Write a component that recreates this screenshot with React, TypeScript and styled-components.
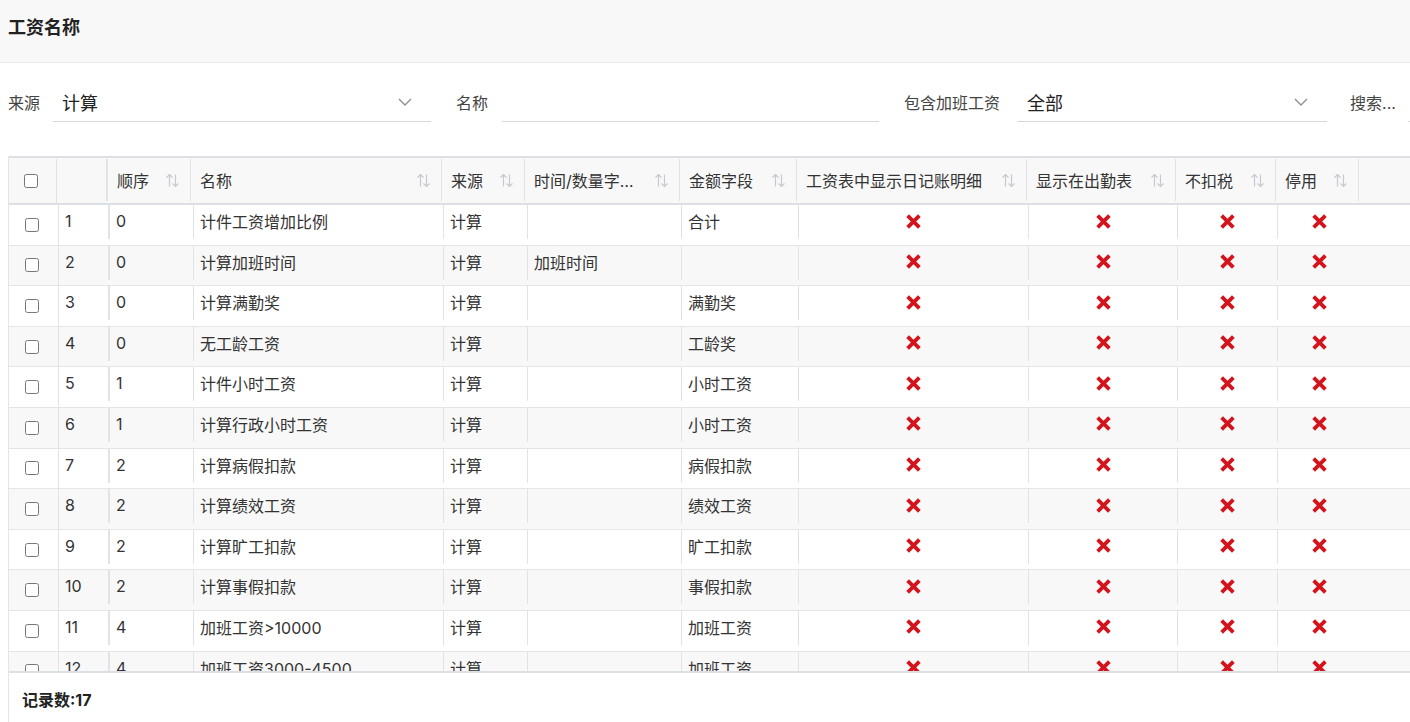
import React from "react";
import styled, { createGlobalStyle } from "styled-components";

const GlobalStyle = createGlobalStyle`
  html, body {
    margin: 0;
    padding: 0;
    background: #fff;
  }
  body {
    font-family: Inter, "Noto Sans CJK SC", sans-serif;
    color: #333;
  }
  * { box-sizing: border-box; }
`;

interface Row {
  order: number;
  name: string;
  time: string;
  amount: string;
}

const rows: Row[] = [
  { order: 0, name: "计件工资增加比例", time: "", amount: "合计" },
  { order: 0, name: "计算加班时间", time: "加班时间", amount: "" },
  { order: 0, name: "计算满勤奖", time: "", amount: "满勤奖" },
  { order: 0, name: "无工龄工资", time: "", amount: "工龄奖" },
  { order: 1, name: "计件小时工资", time: "", amount: "小时工资" },
  { order: 1, name: "计算行政小时工资", time: "", amount: "小时工资" },
  { order: 2, name: "计算病假扣款", time: "", amount: "病假扣款" },
  { order: 2, name: "计算绩效工资", time: "", amount: "绩效工资" },
  { order: 2, name: "计算旷工扣款", time: "", amount: "旷工扣款" },
  { order: 2, name: "计算事假扣款", time: "", amount: "事假扣款" },
  { order: 4, name: "加班工资>10000", time: "", amount: "加班工资" },
  { order: 4, name: "加班工资3000-4500", time: "", amount: "加班工资" },
];

// header widths / body widths (body grid sits 2px to the right)
const headCols = [48, 51, 83, 251, 83, 155, 117, 230, 149, 100, 83];
const bodyCols = [50, 51, 84, 250, 84, 154, 117, 230, 149, 100, 83];

const Page = styled.div`
  width: 1410px;
  height: 722px;
  overflow: hidden;
  display: flex;
  flex-direction: column;
`;

const TitleBar = styled.div`
  height: 63px;
  flex: none;
  background: #f8f8f8;
  border-bottom: 1px solid #ececec;
  padding: 17px 8px 0;
  font-size: 18px;
  line-height: 22px;
  font-weight: 700;
  color: #222;
`;

const FilterBar = styled.div`
  display: flex;
  align-items: center;
  padding: 19px 0 0 8px;
  height: 40px;
  box-sizing: content-box;
  flex: none;
  white-space: nowrap;
`;

const FilterLabel = styled.span<{ $gap: number }>`
  font-size: 16px;
  color: #444;
  margin-right: ${(p) => p.$gap}px;
`;

const Field = styled.div<{ $w: number; $next?: number }>`
  width: ${(p) => p.$w}px;
  flex: none;
  height: 40px;
  display: flex;
  align-items: center;
  justify-content: space-between;
  padding: 0 19px 0 9px;
  border-bottom: 1px solid #d3d6db;
  margin-right: ${(p) => p.$next ?? 25}px;
  font-size: 18px;
  color: #222;
`;

const Chevron = () => (
  <svg width="14" height="8" viewBox="0 0 14 8">
    <path d="M1 1 L7 7 L13 1" fill="none" stroke="#8a8f99" strokeWidth="1.4" />
  </svg>
);

const TableBox = styled.div`
  margin: 34px 0 0 8px;
  flex: 1;
  display: flex;
  flex-direction: column;
  border-left: 1px solid #e3e5e8;
  min-height: 0;
`;

const Viewport = styled.div`
  height: 517px;
  flex: none;
  overflow: hidden;
  border-bottom: 2px solid #dcdfe4;
`;

const HeadRow = styled.div`
  display: flex;
  align-items: flex-start;
  height: 49px;
  padding-top: 1px;
  background: #f8f8f9;
  border-top: 2px solid #dcdfe4;
  border-bottom: 2px solid #dcdfe4;
`;

const HeadCell = styled.div<{ $w?: number; $thick?: boolean; $end?: boolean }>`
  width: ${(p) => (p.$w ? `${p.$w}px` : "auto")};
  flex: ${(p) => (p.$w ? "none" : "1")};
  height: 42px;
  display: flex;
  align-items: center;
  padding: 0 10px 0 9px;
  border-right: ${(p) => (p.$end ? "none" : `${p.$thick ? 2 : 1}px solid #e1e3e7`)};
  font-size: 16px;
  color: #333;
  white-space: nowrap;
`;

const HeadText = styled.span<{ $max?: number }>`
  min-width: 0;
  max-width: ${(p) => (p.$max ? `${p.$max}px` : "none")};
  overflow: hidden;
  text-overflow: ellipsis;
  margin-right: auto;
  padding-right: 6px;
`;

const CheckCell = styled.div<{ $w: number; $pad: number }>`
  width: ${(p) => p.$w}px;
  flex: none;
  height: 100%;
  display: flex;
  align-items: center;
  padding-left: ${(p) => p.$pad}px;
  border-right: 1px solid #e1e3e7;
`;

const Check = styled.input.attrs({ type: "checkbox" })`
  margin: 0;
  width: 14px;
  height: 14px;
`;

const BodyRow = styled.div<{ $alt: boolean }>`
  display: flex;
  align-items: flex-start;
  height: 40.6px;
  background: ${(p) => (p.$alt ? "#f8f8f8" : "#fff")};
  border-bottom: 1px solid #e3e5e9;
`;

const Cell = styled.div<{ $w: number; $thick?: boolean; $center?: boolean; $last?: boolean }>`
  width: ${(p) => p.$w}px;
  flex: none;
  height: 34px;
  display: flex;
  align-items: center;
  justify-content: ${(p) => (p.$center ? "center" : "flex-start")};
  padding: 0 6px 2px;
  border-right: ${(p) => (p.$last ? "none" : `${p.$thick ? 2 : 1}px solid #e1e3e7`)};
  font-size: 16px;
  color: #333;
  white-space: nowrap;
  overflow: hidden;
`;

const Footer = styled.div`
  flex: 1;
  padding: 17px 0 0 13px;
  font-size: 16px;
  line-height: 20px;
  font-weight: 700;
  color: #222;
`;

const SortIcon = () => (
  <svg width="15" height="15" viewBox="0 0 15 15">
    <g fill="none" stroke="#c6c9ce" strokeWidth="1.2">
      <path d="M4.5 1.5 V13.5 M1.5 4.5 L4.5 1.5 L7.5 4.5" />
      <path d="M10.5 1.5 V13.5 M7.5 10.5 L10.5 13.5 L13.5 10.5" />
    </g>
  </svg>
);

const Cross = () => (
  <svg width="17" height="17" viewBox="0 0 16 16">
    <path d="M2.5 2.5 L13.5 13.5 M13.5 2.5 L2.5 13.5" stroke="#d3141c" strokeWidth="3.6" />
  </svg>
);

const headers: { label: string; max?: number }[] = [
  { label: "顺序" },
  { label: "名称" },
  { label: "来源" },
  { label: "时间/数量字段", max: 107 },
  { label: "金额字段" },
  { label: "工资表中显示日记账明细" },
  { label: "显示在出勤表" },
  { label: "不扣税" },
  { label: "停用" },
];

export default function App() {
  return (
    <Page>
      <GlobalStyle />
      <TitleBar>工资名称</TitleBar>
      <FilterBar>
        <FilterLabel $gap={13}>来源</FilterLabel>
        <Field $w={378}>
          计算
          <Chevron />
        </Field>
        <FilterLabel $gap={14}>名称</FilterLabel>
        <Field $w={377} />
        <FilterLabel $gap={18}>包含加班工资</FilterLabel>
        <Field $w={309} $next={23}>
          全部
          <Chevron />
        </Field>
        <FilterLabel $gap={12}>搜索...</FilterLabel>
        <Field $w={200} />
      </FilterBar>
      <TableBox>
        <Viewport>
          <HeadRow>
            <CheckCell $w={headCols[0]} $pad={15}>
              <Check />
            </CheckCell>
            <HeadCell $w={headCols[1]} $thick />
            {headers.map((h, i) => (
              <HeadCell key={h.label} $w={headCols[i + 2]}>
                <HeadText $max={h.max}>{h.label}</HeadText>
                <SortIcon />
              </HeadCell>
            ))}
            <HeadCell $end />
          </HeadRow>
          {rows.map((r, i) => (
            <BodyRow key={i} $alt={i % 2 === 1}>
              <CheckCell $w={bodyCols[0]} $pad={16}>
                <Check />
              </CheckCell>
              <Cell $w={bodyCols[1]} $thick>
                {i + 1}
              </Cell>
              <Cell $w={bodyCols[2]}>{r.order}</Cell>
              <Cell $w={bodyCols[3]}>{r.name}</Cell>
              <Cell $w={bodyCols[4]}>计算</Cell>
              <Cell $w={bodyCols[5]}>{r.time}</Cell>
              <Cell $w={bodyCols[6]}>{r.amount}</Cell>
              <Cell $w={bodyCols[7]} $center>
                <Cross />
              </Cell>
              <Cell $w={bodyCols[8]} $center>
                <Cross />
              </Cell>
              <Cell $w={bodyCols[9]} $center>
                <Cross />
              </Cell>
              <Cell $w={bodyCols[10]} $center $last>
                <Cross />
              </Cell>
            </BodyRow>
          ))}
        </Viewport>
        <Footer>记录数:17</Footer>
      </TableBox>
    </Page>
  );
}
